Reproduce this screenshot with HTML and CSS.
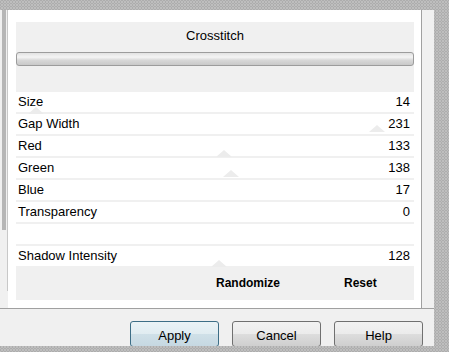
FILE: index.html
```html
<!DOCTYPE html>
<html>
	<head>
		<meta charset="utf-8">
		<title>Crosstitch</title>
		<link rel="stylesheet" href="styles.css">
	</head>
	<body>
		<div class="window">
			<div class="top">
				<div class="strip"><div class="thumb"></div></div>
				<div class="panel">
					<div class="box">
						<div class="head">
							<div class="title">Crosstitch</div>
							<div class="bar"></div>
						</div>
						<div class="rows">
							<div class="row"><span>Size</span><span>14</span><i class="ghost g1"></i></div>
							<div class="row"><span>Gap Width</span><span>231</span><i class="ghost g2"></i></div>
							<div class="row"><span>Red</span><span>133</span><i class="ghost g3"></i></div>
							<div class="row"><span>Green</span><span>138</span><i class="ghost g4"></i></div>
							<div class="row"><span>Blue</span><span>17</span></div>
							<div class="row"><span>Transparency</span><span>0</span></div>
							<div class="row"></div>
							<div class="row"><span>Shadow Intensity</span><span>128</span><i class="ghost g5"></i></div>
						</div>
						<div class="actions">
							<span>Randomize</span>
							<span>Reset</span>
						</div>
					</div>
				</div>
			</div>
			<div class="buttons">
				<button class="default">Apply</button>
				<button>Cancel</button>
				<button>Help</button>
			</div>
		</div>
	</body>
</html>
```
FILE: styles.css
```css
*{margin: 0;padding: 0;box-sizing: border-box;}
html{
	background-color: #bebebe;
	background-image:
		linear-gradient(45deg, #adadad 25%, transparent 25%, transparent 75%, #adadad 75%),
		linear-gradient(45deg, #adadad 25%, transparent 25%, transparent 75%, #adadad 75%);
	background-size: 3px 3px;
	background-position: 0 0, 1px 1px;
}
body{
	width: 449px;height: 352px;
	overflow: hidden;
	font-family: "Liberation Sans", Arial, sans-serif;
	font-size: 13px;
	color: #000;
	padding-top: 10px;
}
.window{
	width: 434px;height: 336px;
	background: #f0f0f0;
	overflow: hidden;
}
.top{
	display: flex;
	height: 299px;
	border-bottom: 1px solid #a0a0a0;
}
.strip{
	width: 8px;
	padding: 0 2px 0 2px;
	border-right: 1px solid #c8c8c8;
	height: 281px;
}
.strip .thumb{
	width: 4px;height: 220px;
	background: #b6b6b6;
}
.panel{
	width: 414px;
	background: #fff;
	border-right: 1px solid #a0a0a0;
	padding: 12px 6px 0 8px;
}
.box{
	width: 398px;height: 278px;
	background: #f0f0f0;
}
.head{
	height: 70px;
	padding-top: 6px;
}
.title{
	text-align: center;
	line-height: 16px;
}
.bar{
	height: 14px;
	margin-top: 8px;
	border: 1px solid #9c9c9c;
	border-radius: 3px;
	background: linear-gradient(#e2e2e2, #f4f4f4 35%, #d8d8d8 60%, #c9c9c9);
}
.rows{
	display: flex;
	flex-direction: column;
	gap: 2px;
}
.row{
	position: relative;
	display: flex;
	justify-content: space-between;
	height: 20px;
	line-height: 20px;
	background: #fff;
	padding: 0 4px 0 2px;
}
.ghost{
	position: absolute;
	width: 0;height: 0;
	border-left: 8px solid transparent;
	border-right: 8px solid transparent;
	border-bottom: 7px solid #ececec;
}
.g1{left: 12px;top: 15px;}
.g2{left: 353px;top: 11px;}
.g3{left: 200px;top: 14px;}
.g4{left: 207px;top: 12px;}
.g5{left: 195px;top: 14px;}
.actions{
	display: flex;
	gap: 64px;
	padding-left: 200px;
	height: 34px;
	line-height: 34px;
	font-size: 12px;
	font-weight: bold;
}
.buttons{
	display: flex;
	justify-content: flex-end;
	gap: 13px;
	padding: 12px 11px 0 0;
}
.buttons button{
	width: 89px;height: 26px;
	font-family: "Liberation Sans", Arial, sans-serif;
	font-size: 13px;
	color: #000;
	border: 1px solid #707070;
	border-radius: 3px;
	background: linear-gradient(#f2f2f2, #ebebeb 50%, #dddddd 50%, #cfcfcf);
	padding-top: 2px;
}
.buttons .default{
	border-color: #3d6e86;
	background: linear-gradient(#eaf3f6, #e0ecf1 50%, #cfe0e8 50%, #c6d8e2);
}
```
